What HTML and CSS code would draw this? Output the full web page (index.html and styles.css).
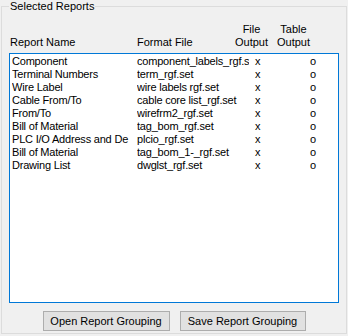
FILE: index.html
```html
<!DOCTYPE html>
<html lang="en">
<head>
  <meta charset="UTF-8" />
  <title>Selected Reports</title>
  <link rel="stylesheet" href="styles.css">
</head>
<body>
  <!-- Nhóm báo cáo đã chọn -->
  <fieldset class="group">
    <legend>Selected Reports</legend>

    <!-- Tiêu đề cột -->
    <div class="head">
      <div class="hd-name">Report Name</div>
      <div class="hd-fmt">Format File</div>
      <div class="hd-file"><span class="hd-out">File<br>Output</span></div>
      <div class="hd-table"><span class="hd-out">Table<br>Output</span></div>
    </div>

    <!-- Danh sách báo cáo (cột bị cắt như trong listbox) -->
    <div class="list">
      <div class="row"><span>Component</span><span>component_labels_rgf.s</span><span>x</span><span>o</span></div>
      <div class="row"><span>Terminal Numbers</span><span>term_rgf.set</span><span>x</span><span>o</span></div>
      <div class="row"><span>Wire Label</span><span>wire labels rgf.set</span><span>x</span><span>o</span></div>
      <div class="row"><span>Cable From/To</span><span>cable core list_rgf.set</span><span>x</span><span>o</span></div>
      <div class="row"><span>From/To</span><span>wirefrm2_rgf.set</span><span>x</span><span>o</span></div>
      <div class="row"><span>Bill of Material</span><span>tag_bom_rgf.set</span><span>x</span><span>o</span></div>
      <div class="row"><span>PLC I/O Address and De</span><span>plcio_rgf.set</span><span>x</span><span>o</span></div>
      <div class="row"><span>Bill of Material</span><span>tag_bom_1-_rgf.set</span><span>x</span><span>o</span></div>
      <div class="row"><span>Drawing List</span><span>dwglst_rgf.set</span><span>x</span><span>o</span></div>
    </div>

    <!-- Nút mở / lưu nhóm báo cáo -->
    <div class="buttons">
      <button class="btn btn-open">Open Report Grouping</button>
      <button class="btn btn-save">Save Report Grouping</button>
    </div>
  </fieldset>
</body>
</html>
```

FILE: styles.css
```css
/* Nền chung kiểu hộp thoại Windows */
body {
  margin: 0;
  background-color: #f0f0f0;
  font-family: "Liberation Sans", Arial, sans-serif;
  font-size: 10.5px;
  line-height: 13px;
  color: #000;
}

/* Group box */
.group {
  margin: 0 1px;
  padding: 10px 7px 2px 7px;
  border: 1px solid #dcdcdc;
  min-width: 0;
}

.group legend {
  padding: 0 1px;
  font-size: 11px;
  line-height: 13px;
}

/* Tiêu đề cột */
.head {
  display: grid;
  grid-template-columns: 127px 98px 42px 1fr;
  padding-left: 1px;
  height: 26px;
  margin-bottom: 4px;
  align-items: end;
  font-size: 11px;
}

.hd-out {
  display: inline-block;
  text-align: center;
}

/* Listbox */
.list {
  height: 247px;
  background-color: #fff;
  border: 1px solid #0078d7;
  padding-top: 1px;
  box-sizing: content-box;
  font-size: 11px;
}

.row {
  display: grid;
  grid-template-columns: 125px 112px 40px 1fr;
  padding-left: 2px;
  height: 13px;
  white-space: nowrap;
}

.row span {
  overflow: hidden;
  letter-spacing: -0.2px;
}

.row span:nth-child(3) {
  padding-left: 6px;
}

.row span:nth-child(4) {
  padding-left: 21px;
}

/* Nút bấm */
.buttons {
  display: flex;
  justify-content: center;
  gap: 10px;
  margin-top: 8px;
}

.btn {
  height: 20px;
  padding: 0;
  font-family: inherit;
  font-size: 11px;
  color: #000;
  background-color: #e1e1e1;
  border: 1px solid #adadad;
  border-radius: 0;
}

.btn-open {
  width: 127px;
}

.btn-save {
  width: 126px;
}
```
